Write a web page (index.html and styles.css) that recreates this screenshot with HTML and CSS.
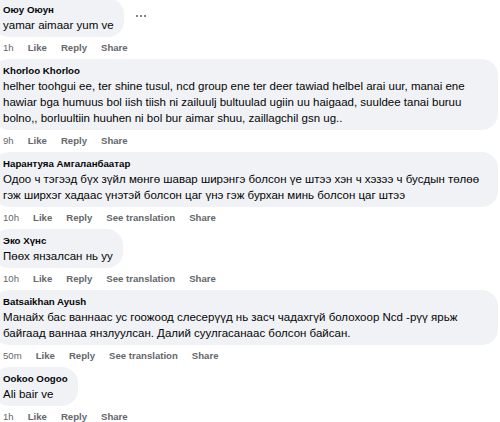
FILE: index.html
```html
<!DOCTYPE html>
<html lang="mn">
<head>
  <meta charset="UTF-8" />
  <title>Comments</title>
  <link rel="stylesheet" href="styles.css">
</head>
<body>

  <div class="thread">

    <div class="comment">
      <div class="bubble-row">
        <div class="bubble">
          <div class="author">Оюу Оюун</div>
          <div class="text">yamar aimaar yum ve</div>
        </div>
        <span class="more">
          <svg width="12" height="4" viewBox="0 0 12 4"><circle cx="2" cy="2" r="1.1"/><circle cx="6" cy="2" r="1.1"/><circle cx="10" cy="2" r="1.1"/></svg>
        </span>
      </div>
      <div class="actions">
        <span class="time">1h</span><span>Like</span><span>Reply</span><span>Share</span>
      </div>
    </div>

    <div class="comment">
      <div class="bubble-row">
        <div class="bubble">
          <div class="author">Khorloo Khorloo</div>
          <div class="text">helher toohgui ee, ter shine tusul, ncd group ene ter deer tawiad helbel arai uur, manai ene hawiar bga humuus bol iish tiish ni zailuulj bultuulad ugiin uu haigaad, suuldee tanai buruu bolno,, borluultiin huuhen ni bol bur aimar shuu, zaillagchil gsn ug..</div>
        </div>
      </div>
      <div class="actions">
        <span class="time">9h</span><span>Like</span><span>Reply</span><span>Share</span>
      </div>
    </div>

    <div class="comment">
      <div class="bubble-row">
        <div class="bubble">
          <div class="author">Нарантуяа Амгаланбаатар</div>
          <div class="text">Одоо ч тэгээд бүх зүйл мөнгө шавар ширэнгэ болсон үе штээ хэн ч хэзээ ч бусдын төлөө гэж ширхэг хадаас үнэтэй болсон цаг үнэ гэж бурхан минь болсон цаг штээ</div>
        </div>
      </div>
      <div class="actions">
        <span class="time">10h</span><span>Like</span><span>Reply</span><span>See translation</span><span>Share</span>
      </div>
    </div>

    <div class="comment">
      <div class="bubble-row">
        <div class="bubble">
          <div class="author">Эко Хүнс</div>
          <div class="text">Пөөх янзалсан нь уу</div>
        </div>
      </div>
      <div class="actions">
        <span class="time">10h</span><span>Like</span><span>Reply</span><span>See translation</span><span>Share</span>
      </div>
    </div>

    <div class="comment">
      <div class="bubble-row">
        <div class="bubble">
          <div class="author">Batsaikhan Ayush</div>
          <div class="text">Манайх бас ваннаас ус гоожоод слесерүүд нь засч чадахгүй болохоор Ncd -рүү ярьж байгаад ваннаа янзлуулсан. Далий суулгасанаас болсон байсан.</div>
        </div>
      </div>
      <div class="actions">
        <span class="time">50m</span><span>Like</span><span>Reply</span><span>See translation</span><span>Share</span>
      </div>
    </div>

    <div class="comment">
      <div class="bubble-row">
        <div class="bubble">
          <div class="author">Ookoo Oogoo</div>
          <div class="text">Ali bair ve</div>
        </div>
      </div>
      <div class="actions">
        <span class="time">1h</span><span>Like</span><span>Reply</span><span>Share</span>
      </div>
    </div>

  </div>

</body>
</html>
```

FILE: styles.css
```css
body {
  margin: 0;
  background: #fff;
  font-family: "Liberation Sans", Arial, sans-serif;
  color: #050505;
  overflow: hidden;
}

.thread {
  margin: -2px 2px 0 -7px;
}

.bubble-row {
  display: flex;
  align-items: center;
}

.bubble {
  background: #f0f2f5;
  border-radius: 16px;
  padding: 5px 10px 4px;
}

.author {
  font-size: 9.7px;
  font-weight: bold;
  line-height: 14px;
}

.text {
  font-size: 11.5px;
  line-height: 16px;
}

.more {
  display: flex;
  margin-left: 11px;
  margin-bottom: 4px;
  fill: #65676b;
}

.actions {
  display: flex;
  gap: 14px;
  padding-left: 10px;
  font-size: 9.6px;
  font-weight: bold;
  line-height: 22px;
  color: #65676b;
}

.actions .time {
  font-weight: normal;
}
```
